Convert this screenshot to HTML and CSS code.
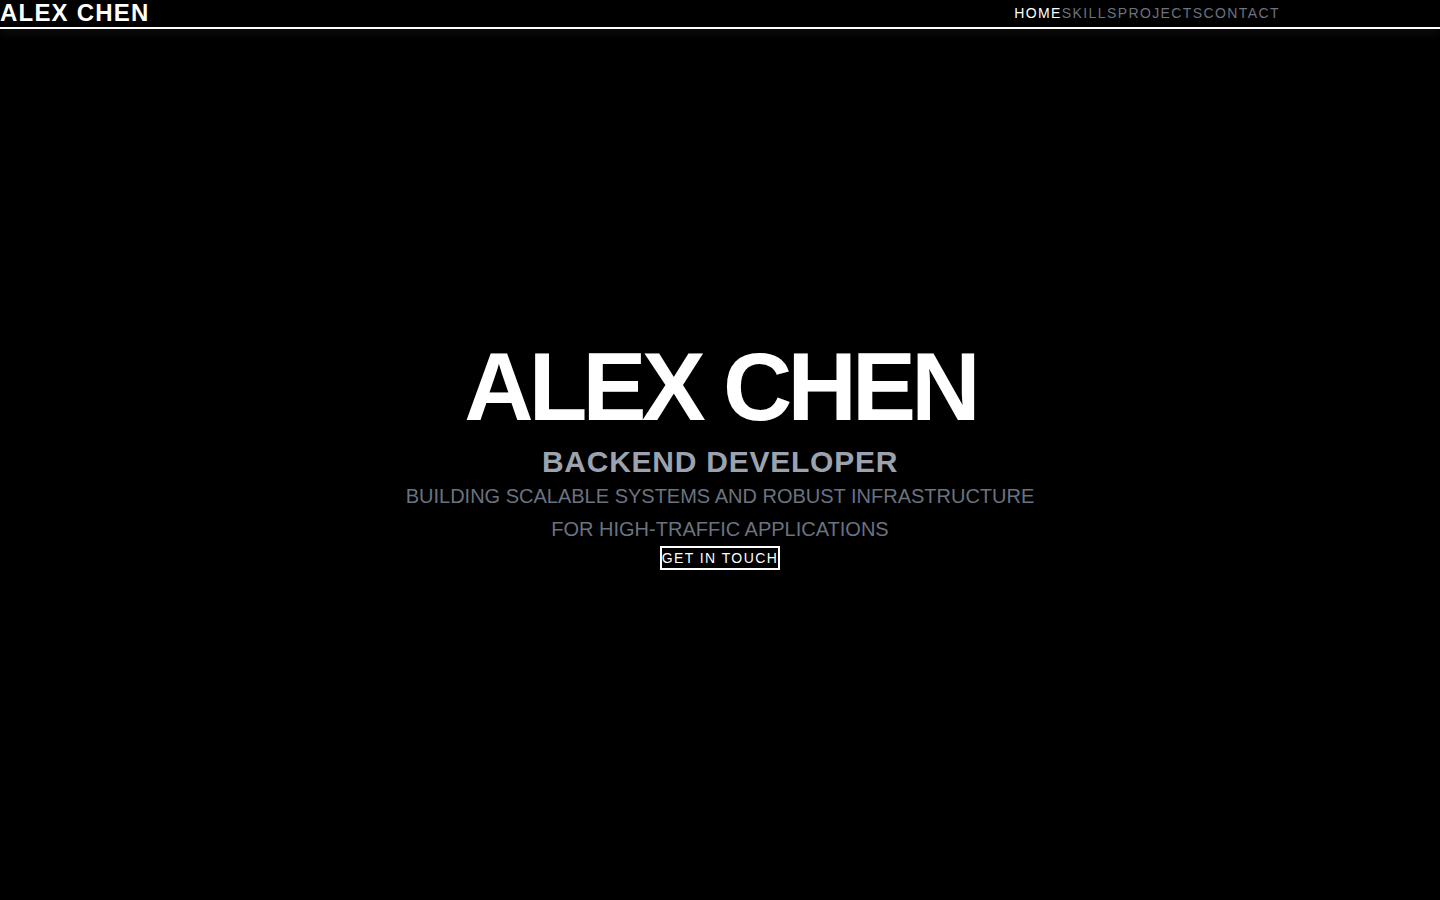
FILE: index.html
```html
<!DOCTYPE html>
<html lang="en">
<head>
<meta charset="utf-8">
<title>Alex Chen — Backend Developer</title>
<link rel="stylesheet" href="styles.css">
</head>
<body>
<header class="site-header">
  <div class="header-inner">
    <div class="logo">ALEX CHEN</div>
    <nav class="nav">
      <a class="nav-link active" href="#home">HOME</a>
      <a class="nav-link" href="#skills">SKILLS</a>
      <a class="nav-link" href="#projects">PROJECTS</a>
      <a class="nav-link" href="#contact">CONTACT</a>
    </nav>
  </div>
</header>
<main class="hero">
  <h1 class="hero-title">ALEX CHEN</h1>
  <h2 class="hero-role">BACKEND DEVELOPER</h2>
  <p class="hero-text">BUILDING SCALABLE SYSTEMS AND ROBUST INFRASTRUCTURE FOR HIGH-TRAFFIC APPLICATIONS</p>
  <a class="hero-btn" href="#contact">GET IN TOUCH</a>
</main>
</body>
</html>
```
FILE: styles.css
```css
* { box-sizing: border-box; }
html, body { margin: 0; padding: 0; background: #000; }
body {
  font-family: "Liberation Sans", Arial, sans-serif;
  color: #fff;
  min-height: 900px;
  display: flex;
  flex-direction: column;
}
.site-header {
  border-bottom: 2px solid #fff;
  box-shadow: 0 4px 12px rgba(255, 255, 255, 0.06);
  position: relative;
  z-index: 1;
}
.header-inner {
  max-width: 1280px;
  height: 27px;
  display: flex;
  justify-content: space-between;
  align-items: center;
}
.logo {
  font-size: 24px;
  font-weight: 700;
  letter-spacing: 0.05em;
  line-height: 25px;
  margin-bottom: 2px;
}
.nav { display: flex; gap: 0; }
.nav-link {
  font-size: 14px;
  letter-spacing: 0.1em;
  color: #6b7280;
  text-decoration: none;
  line-height: 27px;
}
.nav-link.active { color: #fff; }
.hero {
  flex: 1;
  display: flex;
  flex-direction: column;
  align-items: center;
  justify-content: center;
  text-align: center;
  padding-bottom: 20px;
}
.hero-title {
  margin: 0;
  font-size: 96px;
  line-height: 1;
  font-weight: 700;
  letter-spacing: -0.05em;
}
.hero-role {
  margin: 9px 0 0;
  font-size: 30px;
  line-height: 36px;
  font-weight: 700;
  letter-spacing: 0.025em;
  color: #9ca3af;
}
.hero-text {
  margin: 0;
  max-width: 672px;
  font-size: 20px;
  line-height: 1.625;
  color: #6b7280;
}
.hero-btn {
  margin-top: 1px;
  border: 2px solid #fff;
  color: #fff;
  text-decoration: none;
  font-size: 14px;
  line-height: 20px;
  letter-spacing: 0.1em;
  padding: 0;
}
```
